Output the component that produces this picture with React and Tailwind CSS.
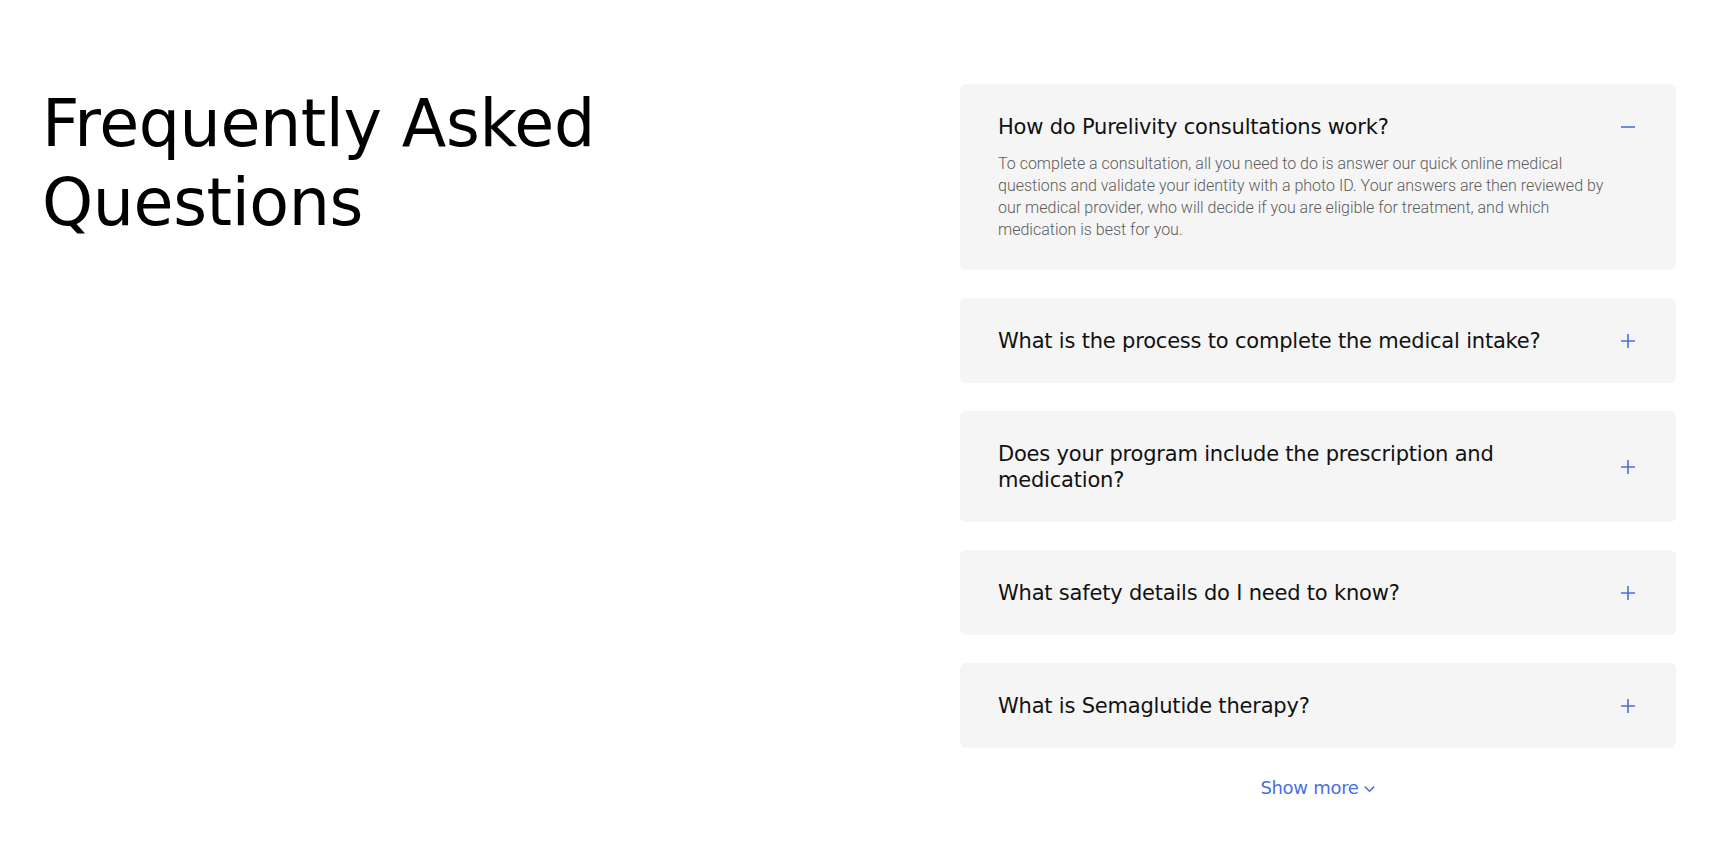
import { useState } from "react";

const faqs = [
  {
    q: "How do Purelivity consultations work?",
    a: "To complete a consultation, all you need to do is answer our quick online medical questions and validate your identity with a photo ID. Your answers are then reviewed by our medical provider, who will decide if you are eligible for treatment, and which medication is best for you.",
  },
  { q: "What is the process to complete the medical intake?", a: "" },
  { q: "Does your program include the prescription and medication?", a: "" },
  { q: "What safety details do I need to know?", a: "" },
  { q: "What is Semaglutide therapy?", a: "" },
];

function PlusIcon() {
  return (
    <svg width="16" height="16" viewBox="0 0 16 16" fill="none" stroke="#4a6fe3" strokeWidth="1.6">
      <path d="M8 1v14M1 8h14" />
    </svg>
  );
}

function MinusIcon() {
  return (
    <svg width="16" height="16" viewBox="0 0 16 16" fill="none" stroke="#4a6fe3" strokeWidth="1.6">
      <path d="M1 8h14" />
    </svg>
  );
}

export default function App() {
  const [open, setOpen] = useState(0);

  return (
    <div className="min-h-screen bg-white font-['DejaVu_Sans',sans-serif]">
      <div className="flex justify-between pl-[42px] pr-[59px] pt-[84px]">
        {/* Heading */}
        <h1 className="text-[65px] leading-[79px] font-normal text-black tracking-[-0.4px] w-[640px]">
          Frequently Asked
          <br />
          Questions
        </h1>

        {/* Accordion */}
        <div className="w-[716px] flex flex-col">
          <div className="flex flex-col gap-[28px]">
            {faqs.map((item, i) => (
              <div key={i} className="bg-[#f5f5f5] rounded-[6px] pl-[38px] pr-[40px] pt-[30px] pb-[29px]">
                <button
                  type="button"
                  onClick={() => setOpen(open === i ? -1 : i)}
                  className="w-full min-h-[26px] flex items-center justify-between text-left gap-8"
                >
                  <span className="text-[21px] leading-[26px] text-[#111] tracking-[-0.2px] max-w-[580px]">
                    {item.q}
                  </span>
                  <span className="shrink-0">{open === i ? <MinusIcon /> : <PlusIcon />}</span>
                </button>
                {open === i && item.a && (
                  <p className="mt-[13px] max-w-[625px] text-[16px] leading-[22px] text-[#5c5c5c] font-['Roboto',sans-serif] font-light">
                    {item.a}
                  </p>
                )}
              </div>
            ))}
          </div>

          <button type="button" className="mt-[28px] self-center flex items-center gap-1 text-[18px] leading-[24px] text-[#4a6fe3] tracking-[-0.3px]">
            Show more
            <svg width="13" height="13" viewBox="0 0 14 14" fill="none" stroke="#4a6fe3" strokeWidth="1.6">
              <path d="M2 5l5 5 5-5" />
            </svg>
          </button>
        </div>
      </div>
    </div>
  );
}
